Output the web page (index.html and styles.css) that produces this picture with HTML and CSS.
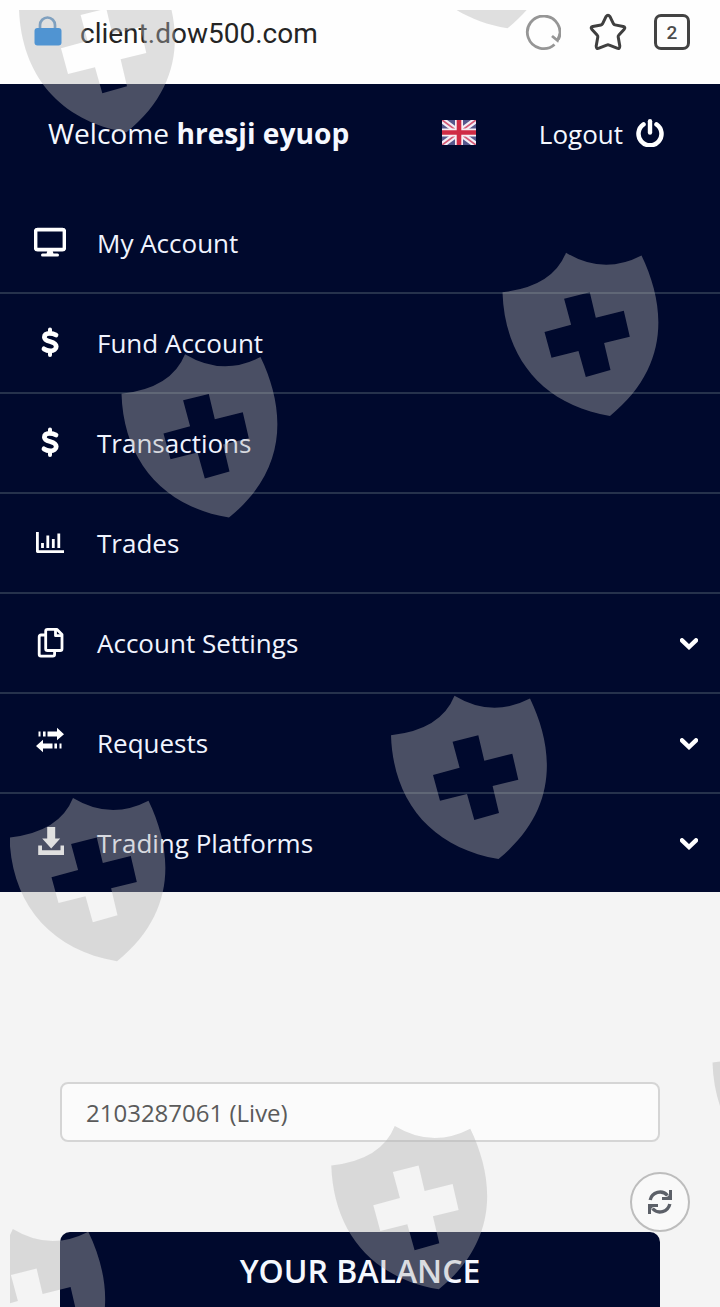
FILE: index.html
```
<!DOCTYPE html>
<html lang="en">
<head>
    <meta charset="UTF-8">
    <meta name="viewport" content="width=device-width, initial-scale=1.0">
    <title>Client Area</title>
    <link rel="stylesheet" href="styles.css">
</head>
<body>
    <div class="browser-bar">
        <svg class="lock" width="28" height="30" viewBox="0 0 28 30">
            <path d="M6 14V9a7.500 7.500 0 0 1 15 0v5" fill="none" stroke="#5b93c8" stroke-width="2.700"/>
            <rect x="0.500" y="12" width="27" height="17.500" rx="3" fill="#0b7fe8"/>
        </svg>
        <span class="url">client.dow500.com</span>
        <svg class="reload" width="36" height="36" viewBox="0 0 36 36" fill="none" stroke="#969696" stroke-width="2.800">
            <path d="M29.500 29.500A16.300 16.300 0 1 1 33.300 24.500"/>
            <path d="M27 21l5.500 4.500L35 19" />
        </svg>
        <svg class="star" width="38" height="38" viewBox="0 0 38 38" fill="none" stroke="#3f3f3f" stroke-width="3" stroke-linejoin="round">
            <path d="M17 3.600Q19 0.900 21 3.600L24.500 10.800Q25 11.700 26 11.900L34.200 13.400Q37 14.200 35 16.400L29.700 22.300Q29 23 29.200 24L30.800 33Q30.800 36.300 28 35.200L20.300 32.200Q19 31.500 17.700 32.200L10 35.200Q7.200 36.300 7.200 33L8.800 24Q9 23 8.300 22.300L3 16.400Q1 14.200 3.800 13.400L12 11.900Q13 11.700 13.500 10.800Z"/>
        </svg>
        <span class="tabs">2</span>
    </div>

    <div class="header">
        <div class="welcome">Welcome <b>hresji eyuop</b></div>
        <svg class="flag" width="34" height="25" viewBox="0 0 34 25">
            <rect width="34" height="25" fill="#55568c"/>
            <path d="M0 0L34 25M34 0L0 25" stroke="#f3edf5" stroke-width="6"/>
            <path d="M0 0L34 25M34 0L0 25" stroke="#d55a76" stroke-width="1.800"/>
            <path d="M17 0V25M0 12.500H34" stroke="#f6eef4" stroke-width="8"/>
            <path d="M17 0V25M0 12.500H34" stroke="#cf2b45" stroke-width="4.600"/>
        </svg>
        <a class="logout">Logout
            <svg width="28" height="28" viewBox="0 0 28 28" fill="none" stroke="#fff" stroke-linecap="round">
                <path d="M7.500 5.300A11.500 11.500 0 1 0 20.500 5.300" stroke-width="4.500"/>
                <path d="M14 2.200V13.500" stroke-width="4.400"/>
            </svg>
        </a>
    </div>

    <ul class="menu">
        <li>
            <svg class="icon" width="32" height="32" viewBox="0 0 32 32">
                <rect x="1.600" y="3.600" width="28.800" height="20" rx="2" fill="none" stroke="#fff" stroke-width="3.600"/>
                <path d="M13.500 24h5l1 4h-7z" fill="#fff"/>
                <path d="M8.500 29h15" stroke="#fff" stroke-width="3" stroke-linecap="round"/>
            </svg>
            <span>My Account</span>
        </li>
        <li>
            <svg class="icon" width="32" height="32" viewBox="0 0 32 32" fill="none" stroke="#fff" stroke-linecap="round">
                <path d="M22 9C20 7.800 18 7.400 15.500 7.400c-3.600 0-5.100 1.600-5.100 3.800 0 5.500 11.800 3 11.800 9.200 0 2.800-2.300 4.400-6 4.400-2.500 0-4.300-.6-6.200-1.900" stroke-width="4.800"/>
                <path d="M16 3.500V7M16 25v4" stroke-width="4"/>
            </svg>
            <span>Fund Account</span>
        </li>
        <li>
            <svg class="icon" width="32" height="32" viewBox="0 0 32 32" fill="none" stroke="#fff" stroke-linecap="round">
                <path d="M22 9C20 7.800 18 7.400 15.500 7.400c-3.600 0-5.100 1.600-5.100 3.800 0 5.500 11.800 3 11.800 9.200 0 2.800-2.300 4.400-6 4.400-2.500 0-4.300-.6-6.200-1.900" stroke-width="4.800"/>
                <path d="M16 3.500V7M16 25v4" stroke-width="4"/>
            </svg>
            <span>Transactions</span>
        </li>
        <li>
            <svg class="icon" width="32" height="32" viewBox="0 0 32 32" fill="none" stroke="#fff" stroke-width="2.800" stroke-linejoin="round">
                <path d="M3.400 6V25.600H30"/>
                <path d="M8.500 22v-5M13.800 22V9.500M19.300 22v-9M24.800 22V7.500"/>
            </svg>
            <span>Trades</span>
        </li>
        <li>
            <svg class="icon" width="32" height="32" viewBox="0 0 32 32" fill="none" stroke="#fff" stroke-width="2.800" stroke-linejoin="round">
                <path d="M13.500 3.300h9.300l5.200 5.200v14.200q0 1.800-1.800 1.800H13.500q-1.800 0-1.800-1.800V5.100q0-1.800 1.800-1.800z"/>
                <path d="M21.500 4v5.700H28"/>
                <path d="M11 9H7Q5.200 9 5.200 10.800V28.300q0 1.800 1.800 1.800H18.800q1.800 0 1.800-1.800V25"/>
            </svg>
            <span>Account Settings</span>
        </li>
        <li>
            <svg class="icon" width="32" height="32" viewBox="0 0 32 32" fill="#fff">
                <path d="M13.500 5.500h9.500V1.800l7 6.400-7 6.100v-3.800h-9.500zM4.500 5.500h2v5h-2zM9 5.500h2.600v5H9z"/>
                <path d="M18.500 17.500H9v-3.700l-7 6.300 7 6.100v-3.800h9.500zM20.400 17.500H23v5h-2.600zM25.500 17.500h2v5h-2z"/>
            </svg>
            <span>Requests</span>
        </li>
        <li>
            <svg class="icon" width="32" height="32" viewBox="0 0 32 32" fill="#fff">
                <path d="M13.200 1h8v11.500h5L17.200 22.500 8.200 12.500h5z"/>
                <path d="M4.200 19.500H8v4.700h18.500v-4.700H30V29H4.200z"/>
            </svg>
            <span>Trading Platforms</span>
        </li>
    </ul>

    <div class="content">
        <div class="account-select">2103287061 (Live)</div>
        <button class="refresh">
            <svg width="24" height="24" viewBox="0 0 24 24">
                <path d="M2.200 10A10 10 0 0 1 19.500 5.500M21.800 14A10 10 0 0 1 4.500 18.500" fill="none" stroke="#5c6068" stroke-width="3.400"/>
                <path d="M24 0V10H14V7h5l2-2V0zM0 24V14h10v3H5l-2 2v5z" fill="#5c6068"/>
            </svg>
        </button>
        <div class="balance">YOUR BALANCE</div>
    </div>

    <!-- Watermark -->
    <svg class="watermark" width="720" height="1307" viewBox="0 0 720 1307">
        <defs>
            <path id="shield" fill-rule="evenodd" d="M0 39.500Q50 34 63.500 0Q101 22.600 139 2.800C164 55 167 115 107.500 163.300C40 152 2 105 0 39.500ZM61.600 46L87.300 39.600L93.300 65L121.300 58L127.300 84L101.600 90.300L108 117.300L83.300 124.300L76 98.300L49 105L42 79.300L68.600 72Z"/>
            <clipPath id="page"><rect x="10" y="10" width="710" height="1297"/></clipPath>
        </defs>
        <g clip-path="url(#page)">
            <use href="#shield" x="19" y="-31"/>
            <use href="#shield" x="400" y="-135"/>
            <use href="#shield" x="502.500" y="252.700"/>
            <use href="#shield" x="121.500" y="354.300"/>
            <use href="#shield" x="391" y="695.700"/>
            <use href="#shield" x="9.500" y="798"/>
            <use href="#shield" x="712.500" y="1023"/>
            <use href="#shield" x="331.300" y="1126"/>
            <use href="#shield" x="-50.700" y="1229"/>
        </g>
    </svg>

    <script>
        document.querySelectorAll('.menu li:nth-child(n+5)').forEach((item) => {
            item.insertAdjacentHTML('beforeend', '<svg class="arrow" width="18" height="12" viewBox="0 0 18 12"><path d="M2 2.300L9 9L16 2.300" fill="none" stroke="#fff" stroke-width="4.400" stroke-linecap="round"/></svg>');
        });
    </script>
</body>
</html>
```
FILE: styles.css
```
* {
    box-sizing: border-box;
}
body {
    margin: 0;
    width: 720px;
    height: 1307px;
    overflow: hidden;
    position: relative;
    background-color: #f4f4f4;
    font-family: 'Open Sans', sans-serif;
}
svg {
    display: block;
    flex-shrink: 0;
}
.browser-bar {
    display: flex;
    align-items: center;
    height: 84px;
    padding: 0 30px 20px 34px;
    background-color: #fefefe;
}
.lock {
    margin: 0 18px 2px 0;
}
.url {
    flex: 1;
    padding-top: 3px;
    font-family: Roboto, sans-serif;
    font-size: 28px;
    color: #242424;
}
.reload {
    margin-top: 1px;
}
.star {
    margin: 0 27px 0 28px;
}
.tabs {
    width: 36px;
    height: 36px;
    border: 3px solid #434343;
    border-radius: 7px;
    font-family: Roboto, sans-serif;
    font-size: 19px;
    font-weight: 500;
    line-height: 31px;
    text-align: center;
    color: #4c4c4c;
}
.header {
    display: flex;
    align-items: center;
    height: 110px;
    padding: 0 56px 11px 48px;
    background-color: #00092d;
    color: #f5f8ff;
}
.welcome {
    width: 394px;
    padding-bottom: 2px;
    font-size: 28.15px;
}
.flag {
    margin-bottom: 2px;
}
.logout {
    display: flex;
    align-items: center;
    gap: 13px;
    margin-left: auto;
    font-size: 26px;
}
.logout svg {
    margin-bottom: 2px;
}
.menu {
    list-style: none;
    margin: 0;
    padding: 0;
    background-color: #00092d;
    color: #f0f4ff;
    font-size: 26px;
}
.menu li {
    display: flex;
    align-items: center;
    height: 100px;
    padding: 0 22px 0 34px;
    border-bottom: 2px solid #26324c;
}
.menu li:last-child {
    height: 98px;
    border-bottom: none;
}
.icon {
    margin: 0 31px 2px 0;
}
.arrow {
    margin: 2px 0 0 auto;
}
.content {
    display: flex;
    flex-direction: column;
    padding: 190px 60px 0;
}
.account-select {
    height: 60px;
    padding-left: 24px;
    border: 2px solid #d5d5d5;
    border-radius: 8px;
    background-color: #fbfbfb;
    color: #5a5a5a;
    font-size: 24px;
    line-height: 58px;
}
.refresh {
    display: flex;
    align-items: center;
    justify-content: center;
    align-self: flex-end;
    width: 60px;
    height: 60px;
    margin: 30px -30px 0 0;
    padding: 0;
    border: 2px solid #bdbdbd;
    border-radius: 50%;
    background-color: #f9f9f9;
}
.balance {
    height: 90px;
    border-radius: 10px 10px 0 0;
    background-color: #00092d;
    color: #f5f8ff;
    font-size: 32px;
    font-weight: 600;
    line-height: 77px;
    text-align: center;
}
.watermark {
    position: absolute;
    left: 0;
    top: 0;
    fill: rgba(180, 180, 180, 0.41);
    pointer-events: none;
}
```
